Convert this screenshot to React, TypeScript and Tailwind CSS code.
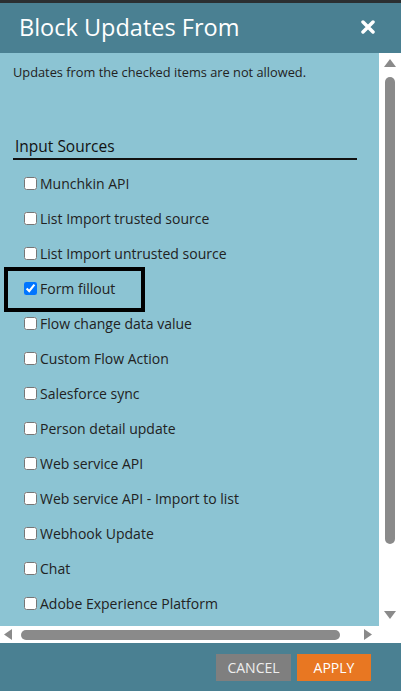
import React from 'react';

const sources = [
  'Munchkin API',
  'List Import trusted source',
  'List Import untrusted source',
  'Form fillout',
  'Flow change data value',
  'Custom Flow Action',
  'Salesforce sync',
  'Person detail update',
  'Web service API',
  'Web service API - Import to list',
  'Webhook Update',
  'Chat',
  'Adobe Experience Platform',
];

function Row({ label }: { label: string }) {
  const checked = label === 'Form fillout';
  const row = (
    <label className="flex items-center h-[35px] text-[14px] text-[#222]">
      <input type="checkbox" defaultChecked={checked} className="m-0 w-[13px] h-[13px] ml-[24px] mr-[3px]" />
      <span>{label}</span>
    </label>
  );
  if (!checked) return row;
  return (
    <div className="relative">
      {row}
      <div className="absolute left-[4px] top-[-4px] w-[141px] h-[45px] border-[4px] border-black pointer-events-none" />
    </div>
  );
}

export default function App() {
  return (
    <div className="w-[401px] h-[691px] flex flex-col overflow-hidden" style={{ fontFamily: '"Open Sans", "Noto Sans", sans-serif' }}>
      <div className="h-[3px] bg-[#2b2f31]" />
      <div className="h-[50px] bg-[#4a8092] flex items-center justify-between pl-[19px] pr-[26px]">
        <span className="text-white text-[23.5px] mt-[-1px]">Block Updates From</span>
        <svg width="14" height="14" viewBox="0 0 14 14" className="mt-[-2px]">
          <path d="M2 2 L12 12 M12 2 L2 12" stroke="white" strokeWidth="3.5" strokeLinecap="round" />
        </svg>
      </div>
      <div className="h-[573px] flex">
        <div className="flex-1 bg-[#8cc4d3] overflow-hidden">
          <p className="text-[12.8px] text-[#222] pl-[13px] pt-[10px] leading-[18px]">
            Updates from the checked items are not allowed.
          </p>
          <div className="mt-[54px] mx-[13px] w-[344px] border-b-2 border-[#111] pl-[2px] pb-[1px] text-[15.5px] text-[#111] leading-[22px]">
            Input Sources
          </div>
          <div className="pt-[6px]">
            {sources.map(s => (
              <Row key={s} label={s} />
            ))}
          </div>
        </div>
        <div className="w-[22px] bg-white flex flex-col items-center pt-[6px]">
          <svg width="12" height="8" viewBox="0 0 12 8">
            <path d="M6 0 L12 8 L0 8 Z" fill="#8a8a8a" />
          </svg>
          <div className="mt-[10px] w-[10px] h-[467px] rounded-full bg-[#8a8a8a]" />
          <svg width="12" height="8" viewBox="0 0 12 8" className="mt-[67px]">
            <path d="M0 0 L12 0 L6 8 Z" fill="#8a8a8a" />
          </svg>
        </div>
      </div>
      <div className="h-[17px] bg-white flex items-center">
        <svg width="8" height="11" viewBox="0 0 8 11" className="ml-[4px]">
          <path d="M8 0 L8 11 L0 5.5 Z" fill="#8a8a8a" />
        </svg>
        <div className="ml-[9px] w-[319px] h-[10px] rounded-full bg-[#8a8a8a]" />
        <svg width="8" height="11" viewBox="0 0 8 11" className="ml-[24px]">
          <path d="M0 0 L8 5.5 L0 11 Z" fill="#8a8a8a" />
        </svg>
      </div>
      <div className="h-[48px] bg-[#4a8092] flex items-center justify-end pr-[30px] gap-[6px]">
        <button className="w-[75px] h-[27px] bg-[#7f7f7f] text-[#eeeeee] text-[14px] uppercase">Cancel</button>
        <button className="w-[74px] h-[27px] bg-[#e87722] text-white text-[14px] uppercase">Apply</button>
      </div>
    </div>
  );
}
